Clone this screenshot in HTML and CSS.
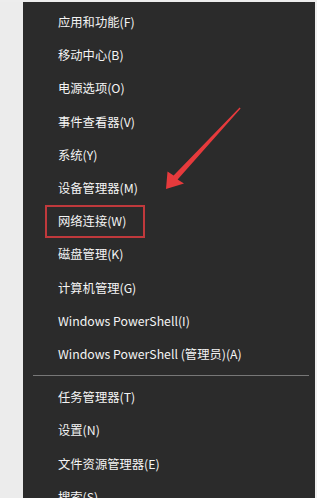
FILE: index.html
```html
<!DOCTYPE html>
<html lang="zh-CN">
<head>
<meta charset="utf-8">
<link rel="stylesheet" href="styles.css">
</head>
<body>
<div class="screen">
  <div class="side"></div>
  <div class="menu">
    <ul class="group">
      <li class="item">应用和功能(F)</li>
      <li class="item">移动中心(B)</li>
      <li class="item">电源选项(O)</li>
      <li class="item">事件查看器(V)</li>
      <li class="item">系统(Y)</li>
      <li class="item">设备管理器(M)</li>
      <li class="item"><span class="marked">网络连接(W)</span></li>
      <li class="item">磁盘管理(K)</li>
      <li class="item">计算机管理(G)</li>
      <li class="item">Windows PowerShell(I)</li>
      <li class="item">Windows PowerShell (管理员)(A)</li>
    </ul>
    <div class="sep"></div>
    <ul class="group">
      <li class="item">任务管理器(T)</li>
      <li class="item">设置(N)</li>
      <li class="item">文件资源管理器(E)</li>
      <li class="item">搜索(S)</li>
    </ul>
  </div>
  <div class="edge"></div>
  <svg class="arrow" width="317" height="498" viewBox="0 0 317 498" aria-hidden="true">
    <polygon points="240.6,108.4 177.6,179.4 184,183.5 166,189 167.5,171.5 173.6,175.6 239.6,107.6" fill="#e63a3c"/>
  </svg>
</div>
</body>
</html>
```

FILE: styles.css
```css
html, body {
  margin: 0;
  padding: 0;
  background: #ededed;
}
.screen {
  position: relative;
  width: 317px;
  height: 498px;
  overflow: hidden;
  display: flex;
  padding-top: 2px;
  box-sizing: border-box;
}
.side {
  width: 23px;
  flex: none;
  background: #ececec;
}
.edge {
  width: 2px;
  flex: none;
  background: #efefef;
}
.menu {
  flex: 1;
  background: #2b2b2b;
  padding-top: 3.5px;
  font-family: "Segoe UI", "Noto Sans CJK SC", "Noto Sans", sans-serif;
  font-size: 12.3px;
  color: #f4f4f4;
}
.group {
  list-style: none;
  margin: 0;
  padding: 0;
}
.item {
  height: 33.2px;
  display: flex;
  align-items: center;
  padding-left: 35px;
  white-space: nowrap;
}
.marked {
  position: relative;
}
.marked::after {
  content: "";
  position: absolute;
  left: -13px;
  right: -19px;
  top: -7px;
  bottom: -8px;
  border: 2px solid #c0393c;
}
.sep {
  height: 1px;
  background: #777777;
  margin: 4px 6px 5px 10px;
}
.arrow {
  position: absolute;
  left: 0;
  top: 0;
  pointer-events: none;
}
```
